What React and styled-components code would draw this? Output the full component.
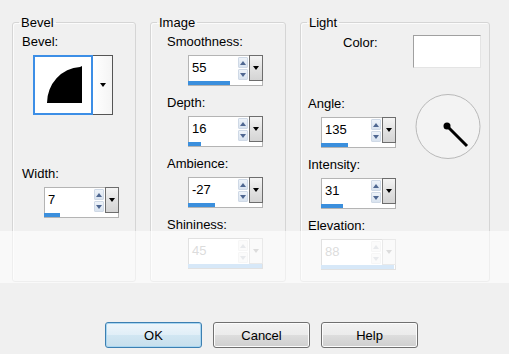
import React from "react";
import styled, { createGlobalStyle } from "styled-components";

const GlobalStyle = createGlobalStyle`
  html, body {
    margin: 0;
    padding: 0;
    background: #f0f0f0;
  }
  body {
    font-family: "Liberation Sans", Arial, sans-serif;
    font-size: 13px;
    color: #000;
  }
`;

const Dialog = styled.div`
  position: relative;
  width: 509px;
  height: 354px;
  background: #f0f0f0;
  overflow: hidden;
`;

const Groups = styled.div`
  display: flex;
  gap: 14px;
  padding: 15px 0 0 12px;
  height: 267px;
`;

const Group = styled.fieldset`
  box-sizing: border-box;
  width: ${(p) => p.$w}px;
  height: 267px;
  margin: 0;
  padding: 0;
  border: 1px solid #d5d5d5;
  border-radius: 3px;
  box-shadow: inset 1px 1px 0 #fbfbfb;
  min-width: 0;
`;

const Legend = styled.legend`
  font-size: 13px;
  line-height: 15px;
  padding: 0 2px;
  margin-left: 6px;
`;

const Body = styled.div`
  display: flex;
  flex-direction: column;
  padding: ${(p) => p.$pad};
`;

const Label = styled.div`
  font-size: 13px;
  line-height: 15px;
  white-space: nowrap;
`;

const Field = styled.div`
  display: flex;
  flex-direction: column;
  & + & {
    margin-top: 9px;
  }
`;

const SpinBox = styled.div`
  box-sizing: border-box;
  width: 75px;
  height: 31px;
  margin-top: 6px;
  margin-left: ${(p) => p.$indent}px;
  border: 1px solid #b4b4b4;
  background: #fff;
  display: grid;
  grid-template-columns: 1fr 11px 13px;
  grid-template-rows: 24px 1fr;
`;

const SpinText = styled.div`
  padding-left: 3px;
  line-height: 23px;
  font-size: 13px;
  color: ${(p) => (p.$disabled ? "#a8a8a8" : "#000")};
`;

const Arrows = styled.div`
  display: flex;
  flex-direction: column;
  justify-content: space-between;
  padding: 1px 1px 0 0;
  gap: 1px;
`;

const ArrowBtn = styled.div`
  flex: 1;
  display: flex;
  align-items: center;
  justify-content: center;
  background: ${(p) => (p.$disabled ? "#f4f4f4" : "linear-gradient(#eef3f9, #d9e3ef)")};
  border: 1px solid ${(p) => (p.$disabled ? "#e8e8e8" : "#cfd9e6")};
  border-radius: 1px;
`;

const Tri = styled.span`
  width: 0;
  height: 0;
  border-left: 3px solid transparent;
  border-right: 3px solid transparent;
  ${(p) =>
    p.$up
      ? `border-bottom: 4px solid ${p.$color};`
      : `border-top: 4px solid ${p.$color};`}
`;

const DropBtn = styled.div`
  box-sizing: border-box;
  margin: -1px -1px 0 0;
  height: 26px;
  border: 1px solid ${(p) => (p.$disabled ? "#c8c8c8" : "#6d6d6d")};
  background: ${(p) => (p.$disabled ? "#f2f2f2" : "linear-gradient(#f4f4f4, #e2e2e2 50%, #d4d4d4)")};
  display: flex;
  align-items: center;
  justify-content: center;
`;

const Track = styled.div`
  grid-column: 1 / -1;
  align-self: end;
  height: 4px;
  margin-left: -1px;
`;

const Fill = styled.div`
  height: 100%;
  background: ${(p) => (p.$disabled ? "#9cc6ee" : "#3b8fdd")};
`;

const Spin = ({ value, pct, indent = 0, disabled }) => {
  const arrowColor = disabled ? "#c4c8cf" : "#4f6791";
  return (
    <SpinBox $indent={indent}>
      <SpinText $disabled={disabled}>{value}</SpinText>
      <Arrows>
        <ArrowBtn $disabled={disabled}>
          <Tri $up $color={arrowColor} />
        </ArrowBtn>
        <ArrowBtn $disabled={disabled}>
          <Tri $color={arrowColor} />
        </ArrowBtn>
      </Arrows>
      <DropBtn $disabled={disabled}>
        <Tri $color={disabled ? "#a8a8a8" : "#000"} />
      </DropBtn>
      <Track>
        <Fill $disabled={disabled} style={{ width: `${pct}%` }} />
      </Track>
    </SpinBox>
  );
};

const Preview = styled.div`
  display: flex;
  width: 80px;
  height: 60px;
  margin: 6px 0 0 11px;
  box-sizing: border-box;
  border: 1px solid #555;
  border-left: none;
  border-bottom: none;
  background: #fff;
`;

const PreviewImage = styled.div`
  box-sizing: border-box;
  width: 60px;
  height: 60px;
  margin-top: -1px;
  border: 2px solid #3c8ee6;
  background: #fff;
`;

const PreviewDrop = styled.div`
  flex: 1;
  display: flex;
  align-items: center;
  justify-content: center;
  border-bottom: 1px solid #555;
  background: linear-gradient(90deg, #ffffff, #f4f4f4);
`;

const ColorRow = styled.div`
  display: flex;
  align-items: flex-start;
  padding-left: 35px;
`;

const Swatch = styled.div`
  box-sizing: border-box;
  width: 68px;
  height: 33px;
  margin-left: auto;
  background: #fff;
  border: 1px solid #e4e4e4;
  border-top-color: #a0a0a0;
  border-left-color: #a0a0a0;
`;

const LightRow = styled.div`
  display: flex;
  align-items: flex-start;
  margin-top: 28px;
`;

const Column = styled.div`
  display: flex;
  flex-direction: column;
`;

const Dial = styled.svg`
  margin: -3px 0 0 auto;
  flex: none;
`;

const ButtonRow = styled.div`
  display: flex;
  gap: 11px;
  padding: 40px 0 0 105px;
`;

const Button = styled.button`
  box-sizing: border-box;
  width: 97px;
  height: 26px;
  padding: 0;
  font-family: "Liberation Sans", Arial, sans-serif;
  font-size: 13px;
  color: #000;
  border-radius: 3px;
  border: 1px solid ${(p) => (p.$primary ? "#3c7fb1" : "#707070")};
  background: ${(p) =>
    p.$primary
      ? "linear-gradient(#eef6fb, #e0eef7 50%, #d1e6f2 50%, #c7dfec)"
      : "linear-gradient(#f2f2f2, #ebebeb 50%, #dddddd 50%, #cfcfcf)"};
  box-shadow: inset 0 0 0 1px ${(p) => (p.$primary ? "#a9d6f1" : "#fcfcfc")};
`;

const WashBand = styled.div`
  position: absolute;
  left: 0;
  right: 0;
  top: 231px;
  height: 52px;
  background: rgba(255, 255, 255, 0.6);
  pointer-events: none;
`;

export default function App() {
  return (
    <Dialog>
      <GlobalStyle />
      <Groups>
        <Group $w={124}>
          <Legend>Bevel</Legend>
          <Body $pad="4px 0 0 9px">
            <Label>Bevel:</Label>
            <Preview>
              <PreviewImage>
                <svg width="56" height="56" viewBox="0 0 56 56">
                  <path d="M12 46 A35 36 0 0 1 45 10 L47 9 L47 46 Z" fill="#000" />
                </svg>
              </PreviewImage>
              <PreviewDrop>
                <Tri $color="#000" />
              </PreviewDrop>
            </Preview>
            <Label style={{ marginTop: 51 }}>Width:</Label>
            <Spin value="7" pct={22} indent={22} />
          </Body>
        </Group>

        <Group $w={136}>
          <Legend>Image</Legend>
          <Body $pad="4px 0 0 16px">
            <Field>
              <Label>Smoothness:</Label>
              <Spin value="55" pct={57} indent={21} />
            </Field>
            <Field>
              <Label>Depth:</Label>
              <Spin value="16" pct={17} indent={21} />
            </Field>
            <Field>
              <Label>Ambience:</Label>
              <Spin value="-27" pct={37} indent={21} />
            </Field>
            <Field>
              <Label>Shininess:</Label>
              <Spin value="45" pct={100} indent={21} disabled />
            </Field>
          </Body>
        </Group>

        <Group $w={190}>
          <Legend>Light</Legend>
          <Body $pad="5px 8px 0 7px">
            <ColorRow>
              <Label>Color:</Label>
              <Swatch />
            </ColorRow>
            <LightRow>
              <Column>
                <Field>
                  <Label>Angle:</Label>
                  <Spin value="135" pct={37} indent={13} />
                </Field>
                <Field>
                  <Label>Intensity:</Label>
                  <Spin value="31" pct={30} indent={13} />
                </Field>
                <Field>
                  <Label>Elevation:</Label>
                  <Spin value="88" pct={98} indent={13} disabled />
                </Field>
              </Column>
              <Dial width="66" height="67" viewBox="0 0 66 67">
                <circle cx="33" cy="33.5" r="32" fill="#f3f3f3" stroke="#b9b9b9" strokeWidth="1" />
                <line x1="32" y1="33" x2="52" y2="53" stroke="#000" strokeWidth="3" />
                <circle cx="32" cy="33" r="3.5" fill="#000" />
              </Dial>
            </LightRow>
          </Body>
        </Group>
      </Groups>

      <ButtonRow>
        <Button $primary>OK</Button>
        <Button>Cancel</Button>
        <Button>Help</Button>
      </ButtonRow>

      <WashBand />
    </Dialog>
  );
}
